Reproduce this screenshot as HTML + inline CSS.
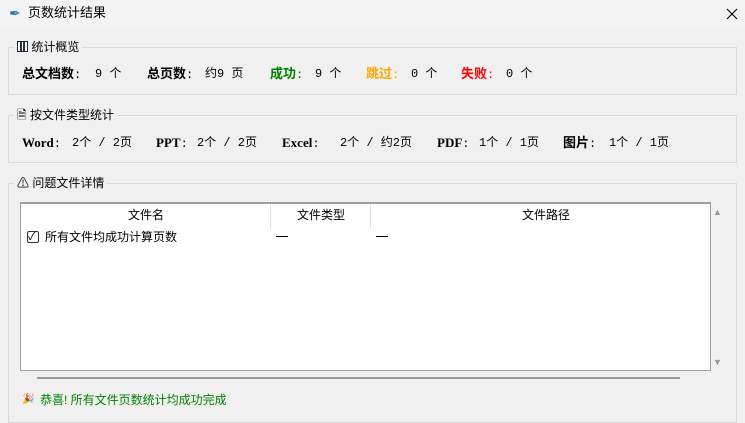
<!DOCTYPE html>
<html><head><meta charset="utf-8"><style>
*{margin:0;padding:0;box-sizing:border-box}
body{width:745px;height:416px;background:#f0f0f0;position:relative;overflow:hidden;font-family:"Liberation Sans","Noto Sans CJK SC",sans-serif;font-size:12px;color:#000}
.a{position:absolute;white-space:pre;line-height:16px}
.title{top:0;left:0;width:745px;height:28px;background:#f3f3f3;position:absolute}
.frame{position:absolute;border:1px solid #d9d9d9;left:8px;width:729px}
.lg{position:absolute;background:#f0f0f0;padding:0 3px;font-size:12px;line-height:16px}
.m{font-family:"Liberation Mono","Noto Sans CJK SC",monospace;font-size:12px}
.b{font-weight:bold;font-family:"Liberation Serif","Noto Sans CJK SC",serif;font-size:13px}
</style></head><body>
<div class="title"></div>
<div class="a" style="left:9px;top:5px;font-size:14px;color:#2a6fb0">&#x2712;</div>
<div class="a" style="left:28px;top:5px;font-size:13px">页数统计结果</div>
<svg style="position:absolute;left:726px;top:8px" width="12" height="12"><path d="M1 1L11 11M11 1L1 11" stroke="#000" stroke-width="1.1"/></svg>

<div class="frame" style="top:47px;height:48px"></div>
<div class="lg" style="left:14px;top:39px"><span style="display:inline-block;width:11px;height:11px;border:1px solid #223;vertical-align:-1px;background:linear-gradient(90deg,#fff 2px,#234 2px,#234 4px,#fff 4px,#fff 5px,#234 5px,#234 7px,#fff 7px)"></span> 统计概览</div>
<div class="a b" style="left:22px;top:66px">总文档数<span class="m" style="font-weight:normal">:</span></div>
<div class="a m" style="left:95px;top:66px">9 个</div>
<div class="a b" style="left:147px;top:66px">总页数<span class="m" style="font-weight:normal">:</span></div>
<div class="a m" style="left:205px;top:66px">约9 页</div>
<div class="a b" style="left:270px;top:66px;color:#008000">成功<span class="m" style="font-weight:normal">:</span></div>
<div class="a m" style="left:315px;top:66px">9 个</div>
<div class="a b" style="left:366px;top:66px;color:#ffa500">跳过<span class="m" style="font-weight:normal">:</span></div>
<div class="a m" style="left:411px;top:66px">0 个</div>
<div class="a b" style="left:461px;top:66px;color:#ff0000">失败<span class="m" style="font-weight:normal">:</span></div>
<div class="a m" style="left:506px;top:66px">0 个</div>

<div class="frame" style="top:115px;height:48px"></div>
<div class="lg" style="left:14px;top:107px">🗎 按文件类型统计</div>
<div class="a b" style="left:22px;top:135px">Word<span class="m" style="font-weight:normal">:</span></div>
<div class="a m" style="left:72px;top:135px">2个 / 2页</div>
<div class="a b" style="left:156px;top:135px">PPT<span class="m" style="font-weight:normal">:</span></div>
<div class="a m" style="left:197px;top:135px">2个 / 2页</div>
<div class="a b" style="left:282px;top:135px">Excel<span class="m" style="font-weight:normal">:</span></div>
<div class="a m" style="left:340px;top:135px">2个 / 约2页</div>
<div class="a b" style="left:437px;top:135px">PDF<span class="m" style="font-weight:normal">:</span></div>
<div class="a m" style="left:479px;top:135px">1个 / 1页</div>
<div class="a b" style="left:563px;top:135px">图片<span class="m" style="font-weight:normal">:</span></div>
<div class="a m" style="left:609px;top:135px">1个 / 1页</div>

<div class="frame" style="top:183px;height:240px"></div>
<div class="lg" style="left:14px;top:175px">⚠ 问题文件详情</div>

<div style="position:absolute;left:20px;top:202px;width:691px;height:169px;background:#fff;border:1px solid #a0a0a0;border-top:2px solid #a0a0a0"></div>
<div style="position:absolute;left:270px;top:204px;width:1px;height:24px;background:#e0e0e0"></div>
<div style="position:absolute;left:370px;top:204px;width:1px;height:24px;background:#e0e0e0"></div>
<div class="a" style="left:128px;top:207px">文件名</div>
<div class="a" style="left:297px;top:207px">文件类型</div>
<div class="a" style="left:522px;top:207px">文件路径</div>
<div style="position:absolute;left:27px;top:231px;width:12px;height:12px;border:1px solid #333;border-radius:2px"></div>
<div class="a" style="left:28px;top:229px;font-size:11px">✓</div>
<div class="a" style="left:45px;top:229px">所有文件均成功计算页数</div>
<div style="position:absolute;left:276px;top:236px;width:12px;height:1px;background:#000"></div>
<div style="position:absolute;left:376px;top:236px;width:12px;height:1px;background:#000"></div>
<div class="a" style="left:713px;top:204px;font-size:9px;color:#999">▲</div>
<div class="a" style="left:713px;top:354px;font-size:9px;color:#999">▼</div>
<div style="position:absolute;left:37px;top:377px;width:643px;height:2px;background:#999"></div>
<div class="a" style="left:22px;top:392px;font-size:10px">🎉</div>
<div class="a" style="left:40px;top:392px;color:#008000">恭喜! 所有文件页数统计均成功完成</div>
</body></html>
